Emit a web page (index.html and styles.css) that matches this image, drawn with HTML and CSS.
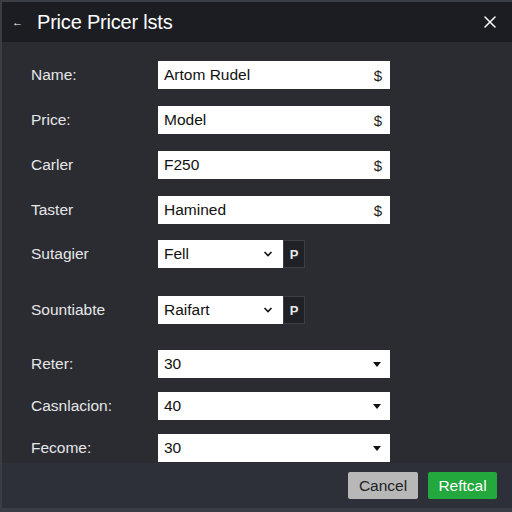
FILE: index.html
```html
<!DOCTYPE html>
<html>
<head>
<meta charset="utf-8">
<link rel="stylesheet" href="styles.css">
</head>
<body>
<div class="dialog">
  <header class="head">
    <span class="back">&#8592;</span>
    <span class="title">Price Pricer lsts</span>
    <span class="close">
      <svg width="14" height="14" viewBox="0 0 14 14"><path d="M2 2 L12 12 M12 2 L2 12" stroke="#fff" stroke-width="1.5" stroke-linecap="round"/></svg>
    </span>
  </header>
  <main class="form">
    <div class="group g1">
      <div class="row"><label>Name:</label><div class="field"><span>Artom Rudel</span><span class="sym">$</span></div></div>
      <div class="row"><label>Price:</label><div class="field"><span>Model</span><span class="sym">$</span></div></div>
      <div class="row"><label>Carler</label><div class="field"><span>F250</span><span class="sym">$</span></div></div>
      <div class="row"><label>Taster</label><div class="field"><span>Hamined</span><span class="sym">$</span></div></div>
    </div>
    <div class="group g2">
      <div class="row"><label>Sutagier</label><div class="select"><span>Fell</span>
        <svg width="10" height="6" viewBox="0 0 10 6"><path d="M1.5 1 L5 4.5 L8.5 1" stroke="#111" stroke-width="1.6" fill="none"/></svg></div><div class="pbox">P</div></div>
      <div class="row"><label>Sountiabte</label><div class="select"><span>Raifart</span>
        <svg width="10" height="6" viewBox="0 0 10 6"><path d="M1.5 1 L5 4.5 L8.5 1" stroke="#111" stroke-width="1.6" fill="none"/></svg></div><div class="pbox">P</div></div>
    </div>
    <div class="group g3">
      <div class="row"><label>Reter:</label><div class="field"><span>30</span><span class="tri"></span></div></div>
      <div class="row"><label>Casnlacion:</label><div class="field"><span>40</span><span class="tri"></span></div></div>
      <div class="row"><label>Fecome:</label><div class="field"><span>30</span><span class="tri"></span></div></div>
    </div>
  </main>
  <footer class="foot">
    <button class="btn cancel">Cancel</button>
    <button class="btn ok">Reftcal</button>
  </footer>
</div>
</body>
</html>
```
FILE: styles.css
```css
html, body {
  margin: 0;
  padding: 0;
  background: #2a2c32;
}
.dialog {
  width: 512px;
  height: 512px;
  display: flex;
  flex-direction: column;
  background: #2a2c32;
  border-left: 2px solid #3a3d44;
  box-sizing: border-box;
  font-family: "Liberation Sans", Arial, sans-serif;
}
.head {
  height: 42px;
  flex: none;
  display: flex;
  align-items: center;
  background: #1b1d23;
  border-top: 2px solid #3b3e45;
  box-sizing: border-box;
  color: #fff;
}
.back {
  font-size: 11px;
  margin-left: 10px;
  width: 25px;
}
.title {
  font-size: 20px;
  letter-spacing: -0.2px;
}
.close {
  margin-left: auto;
  margin-right: 15px;
  display: flex;
}
.form {
  flex: 1;
  padding: 19px 0 0 29px;
  display: flex;
  flex-direction: column;
}
.group {
  display: flex;
  flex-direction: column;
}
.g1 { gap: 17px; }
.g2 { gap: 28px; margin-top: 16px; }
.g3 { gap: 14px; margin-top: 26px; }
.row {
  display: flex;
  align-items: center;
  height: 28px;
}
label {
  width: 127px;
  color: #e6e6e8;
  font-size: 15.5px;
}
.field, .select {
  height: 28px;
  background: #fff;
  display: flex;
  align-items: center;
  justify-content: space-between;
  box-sizing: border-box;
  padding: 0 8px 0 6px;
  color: #111;
  font-size: 15.5px;
}
.field { width: 232px; }
.select { width: 125px; padding-right: 10px; }
.sym {
  font-size: 15px;
  color: #222;
}
.tri {
  width: 0;
  height: 0;
  border-left: 4px solid transparent;
  border-right: 4px solid transparent;
  border-top: 5px solid #111;
  margin-right: 1px;
}
.pbox {
  width: 22px;
  height: 28px;
  box-sizing: border-box;
  background: #1f2127;
  border: 1px solid #3c3f46;
  color: #e8e8e8;
  font-size: 13px;
  font-weight: bold;
  display: flex;
  align-items: center;
  justify-content: center;
}
.foot {
  height: 49px;
  flex: none;
  background: #2d3038;
  border-bottom: 4px solid #3a3d44;
  box-sizing: border-box;
  display: flex;
  align-items: center;
  justify-content: flex-end;
  padding: 0 15px 0 0;
  gap: 10px;
}
.btn {
  height: 27px;
  border: none;
  border-radius: 2px;
  font-family: "Liberation Sans", Arial, sans-serif;
  font-size: 15.5px;
  padding: 0;
}
.cancel {
  width: 70px;
  background: #b8b8b9;
  color: #222;
}
.ok {
  width: 69px;
  background: #22a83c;
  color: #fff;
}
```
